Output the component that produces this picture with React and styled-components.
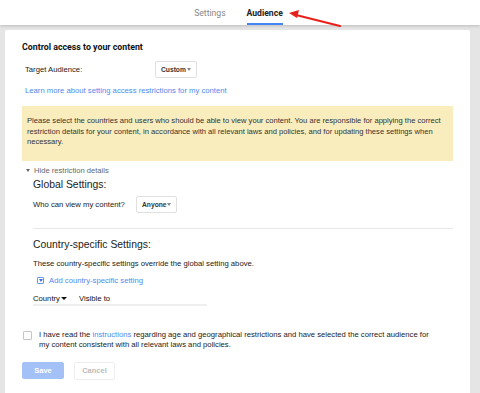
import React, { useState } from "react";
import styled, { createGlobalStyle } from "styled-components";

const GlobalStyle = createGlobalStyle`
  html, body {
    margin: 0;
    padding: 0;
    background: #e5e5e5;
    font-family: "Liberation Sans", Arial, sans-serif;
    color: #333;
  }
`;

const Page = styled.div`
  width: 480px;
  height: 393px;
  overflow: hidden;
  display: flex;
  flex-direction: column;
`;

const TopBar = styled.div`
  position: relative;
  height: 25px;
  background: #fff;
  box-shadow: 0 1px 3px rgba(0, 0, 0, 0.18);
  display: flex;
  justify-content: center;
  gap: 21px;
  padding-right: 3px;
  box-sizing: border-box;
  z-index: 1;
`;

const Tab = styled.div`
  font-family: Roboto, "Liberation Sans", sans-serif;
  font-size: 8.6px;
  font-weight: ${(p) => (p.active ? 700 : 400)};
  color: ${(p) => (p.active ? "#222" : "#888")};
  line-height: 25px;
  height: 25px;
  box-sizing: border-box;
  border-bottom: 2px solid ${(p) => (p.active ? "#4285f4" : "transparent")};
  padding-top: 1px;
`;

const Arrow = styled.svg`
  position: absolute;
  left: 284px;
  top: 6px;
`;

const Body = styled.div`
  flex: 1;
  padding: 5px 10px 0 5px;
  display: flex;
`;

const Card = styled.div`
  flex: 1;
  background: #fff;
  border-radius: 2px 2px 0 0;
  padding: 11px 17px 0 17px;
  display: flex;
  flex-direction: column;
`;

const Title = styled.div`
  font-family: Roboto, "Liberation Sans", sans-serif;
  font-weight: 700;
  font-size: 8.8px;
  line-height: 12px;
  color: #111;
`;

const Row = styled.div`
  display: flex;
  align-items: center;
  margin-top: ${(p) => p.mt || 0}px;
  padding-left: ${(p) => p.indent || 0}px;
`;

const FieldLabel = styled.div`
  font-size: 7.7px;
  color: #222;
  width: ${(p) => p.w}px;
`;

const Dropdown = styled.div`
  height: 17px;
  box-sizing: border-box;
  border: 1px solid #e0e0e0;
  border-radius: 2px;
  padding: 0 5px 0 5px;
  display: flex;
  align-items: center;
  justify-content: space-between;
  font-size: 6.7px;
  font-weight: 700;
  color: #333;
  width: ${(p) => p.w}px;
`;

const Caret = styled.span`
  width: 0;
  height: 0;
  border-left: ${(p) => p.size || 2.5}px solid transparent;
  border-right: ${(p) => p.size || 2.5}px solid transparent;
  border-top: ${(p) => (p.size || 2.5) * 1.2}px solid ${(p) => p.color || "#888"};
  display: inline-block;
`;

const Link = styled.a`
  color: #4d8bf0;
  text-decoration: none;
  cursor: pointer;
`;

const LinkLine = styled.div`
  margin-top: 8px;
  padding-left: 3px;
  font-size: 7.7px;
  line-height: 10px;
`;

const Notice = styled.div`
  margin-top: 10px;
  background: #f9edbe;
  padding: 10px 2px 13px 5px;
  font-size: 7.6px;
  line-height: 10.5px;
  color: #333;
`;

const Toggle = styled.div`
  margin-top: 5px;
  padding-left: 4px;
  display: flex;
  align-items: center;
  gap: 4px;
  font-size: 7.6px;
  line-height: 10px;
  color: #666;
  cursor: pointer;
`;

const Section = styled.div`
  padding-left: 11px;
  display: flex;
  flex-direction: column;
`;

const SubTitle = styled.div`
  margin-top: ${(p) => p.mt}px;
  font-size: 10.4px;
  line-height: 13px;
  color: #222;
`;

const Divider = styled.div`
  margin-top: 15px;
  height: 1px;
  background: #e8e8e8;
`;

const Text = styled.div`
  margin-top: ${(p) => p.mt || 0}px;
  font-size: 7.7px;
  line-height: 10px;
  color: #222;
`;

const AddLine = styled.div`
  margin-top: 7px;
  padding-left: 4px;
  display: flex;
  align-items: center;
  gap: 5px;
  font-size: 7.7px;
  line-height: 10px;
`;

const AddIcon = styled.span`
  width: 7px;
  height: 7px;
  box-sizing: border-box;
  border: 1px solid #6b96ee;
  border-radius: 1px;
  display: flex;
  align-items: center;
  justify-content: center;
`;

const Table = styled.div`
  margin-top: 7px;
  width: 174px;
  border-bottom: 2px solid #eee;
  display: flex;
  font-size: 7.7px;
  line-height: 11px;
  color: #111;
`;

const HeadCell = styled.div`
  width: ${(p) => p.w}px;
  display: flex;
  align-items: center;
  gap: 1px;
`;

const Confirm = styled.div`
  margin-top: 24px;
  display: flex;
  align-items: flex-start;
  gap: 7px;
  padding-left: 1px;
`;

const Box = styled.span`
  width: 7px;
  height: 7px;
  margin-top: 1px;
  border: 1px solid #c6c6c6;
  border-radius: 1px;
  flex-shrink: 0;
  cursor: pointer;
  background: ${(p) => (p.checked ? "#4d8bf0" : "#fff")};
`;

const ConfirmText = styled.p`
  margin: 0;
  width: 400px;
  font-size: 7.7px;
  line-height: 10.5px;
  color: #222;
`;

const Buttons = styled.div`
  margin-top: 11px;
  display: flex;
  align-items: center;
  gap: 10px;
`;

const Button = styled.button`
  height: ${(p) => (p.primary ? 17 : 18)}px;
  width: ${(p) => (p.primary ? 42 : 41)}px;
  padding: 0;
  border-radius: 2px;
  font-family: "Liberation Sans", Arial, sans-serif;
  font-size: 7.5px;
  font-weight: 700;
  border: 1px solid ${(p) => (p.primary ? "#a3c0f7" : "#eee")};
  background: ${(p) => (p.primary ? "#a3c0f7" : "#fff")};
  color: ${(p) => (p.primary ? "#fff" : "#bbb")};
`;

export default function App() {
  const [checked, setChecked] = useState(false);

  return (
    <Page>
      <GlobalStyle />
      <TopBar>
        <Tab>Settings</Tab>
        <Tab active>Audience</Tab>
        <Arrow width="60" height="24" viewBox="0 0 60 24">
          <line x1="56" y1="20" x2="12" y2="9" stroke="#e8201b" strokeWidth="2.2" strokeLinecap="round" />
          <polygon points="5,7 15,4 13,12" fill="#e8201b" />
        </Arrow>
      </TopBar>
      <Body>
        <Card>
          <Title>Control access to your content</Title>
          <Row mt={8} indent={3}>
            <FieldLabel w={130}>Target Audience:</FieldLabel>
            <Dropdown w={42}>
              Custom <Caret />
            </Dropdown>
          </Row>
          <LinkLine>
            <Link>Learn more about setting access restrictions for my content</Link>
          </LinkLine>
          <Notice>
            Please select the countries and users who should be able to view your content. You are
            responsible for applying the correct restriction details for your content, in accordance
            with all relevant laws and policies, and for updating these settings when necessary.
          </Notice>
          <Toggle>
            <Caret color="#666" />
            Hide restriction details
          </Toggle>
          <Section>
            <SubTitle mt={2}>Global Settings:</SubTitle>
            <Row mt={5}>
              <FieldLabel w={103}>Who can view my content?</FieldLabel>
              <Dropdown w={41}>
                Anyone <Caret />
              </Dropdown>
            </Row>
            <Divider />
            <SubTitle mt={9}>Country-specific Settings:</SubTitle>
            <Text mt={8}>These country-specific settings override the global setting above.</Text>
            <AddLine>
              <AddIcon>
                <Caret color="#3f72e0" />
              </AddIcon>
              <Link>Add country-specific setting</Link>
            </AddLine>
            <Table>
              <HeadCell w={46}>
                Country
                <Caret color="#111" size={3} />
              </HeadCell>
              <HeadCell w={128}>Visible to</HeadCell>
            </Table>
          </Section>
          <Confirm>
            <Box checked={checked} onClick={() => setChecked(!checked)} />
            <ConfirmText>
              <span>I have read the </span>
              <Link>instructions</Link>
              <span> regarding age and geographical restrictions and have selected the correct audience for</span>
              <br />
              <span>my content consistent with all relevant laws and policies.</span>
            </ConfirmText>
          </Confirm>
          <Buttons>
            <Button primary disabled={!checked}>Save</Button>
            <Button>Cancel</Button>
          </Buttons>
        </Card>
      </Body>
    </Page>
  );
}
